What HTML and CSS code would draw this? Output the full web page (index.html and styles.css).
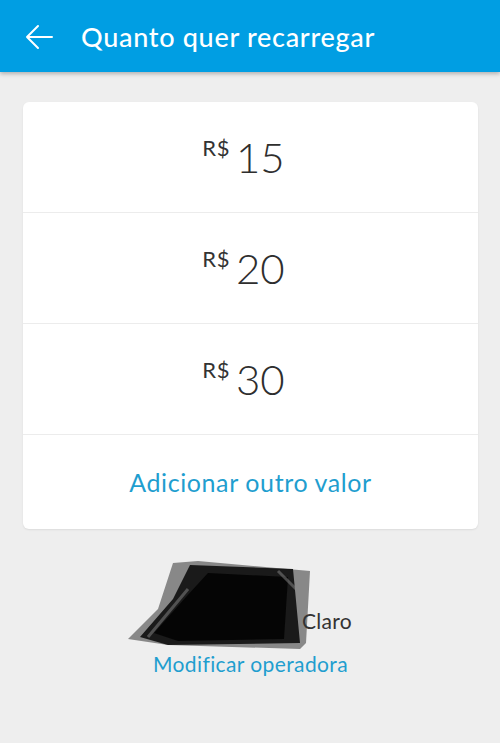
FILE: index.html
```html
<!DOCTYPE html>
<html lang="pt-BR">
<head>
  <meta charset="UTF-8">
  <title>Quanto quer recarregar</title>
  <link rel="stylesheet" href="styles.css">
</head>
<body>
  <header class="topbar">
    <svg class="back" width="30" height="26" viewBox="0 0 30 26">
      <path d="M28 13H3M14 2L3 13l11 11" fill="none" stroke="#fff" stroke-width="2" stroke-linecap="round" stroke-linejoin="round"/>
    </svg>
    <h1>Quanto quer recarregar</h1>
  </header>

  <main class="content">
    <div class="card">
      <div class="amount"><span class="currency">R$</span><span class="value">15</span></div>
      <div class="amount"><span class="currency">R$</span><span class="value">20</span></div>
      <div class="amount"><span class="currency">R$</span><span class="value">30</span></div>
      <div class="other">Adicionar outro valor</div>
    </div>

    <div class="carrier">
      <div class="carrier-row">
        <!-- logo da operadora rabiscado no print original -->
        <svg class="redact" width="184" height="90" viewBox="0 0 184 90">
          <polygon points="45,4 70,2 182,12 178,84 172,90 40,86 0,80 30,50" fill="#666" opacity="0.75"/>
          <polygon points="62,6 165,10 172,84 40,86 12,78 45,40" fill="#1a1a1a"/>
          <polygon points="80,14 160,18 156,80 50,82 26,74 58,38" fill="#050505"/>
          <path d="M150 12L178 40M20 78L60 30" stroke="#888" stroke-width="3" opacity="0.5"/>
        </svg>
        <span class="carrier-name">Claro</span>
      </div>
      <div class="change">Modificar operadora</div>
    </div>
  </main>
</body>
</html>
```

FILE: styles.css
```css
body {
  margin: 0;
  padding: 0;
  font-family: Lato, "Open Sans", sans-serif;
  background: #eeeeee;
  color: #333;
  min-height: 100vh;
}

.topbar {
  height: 72px;
  background: #009ee3;
  display: flex;
  align-items: center;
  padding: 0 24px;
  box-shadow: 0 2px 4px rgba(0,0,0,0.25);
}

.back {
  margin-right: 27px;
  margin-top: 1px;
}

.topbar h1 {
  margin: 0;
  color: #fff;
  font-size: 27px;
  font-weight: 500;
  letter-spacing: 0.7px;
}

.content {
  padding: 30px 22px 0 23px;
}

.card {
  background: #fff;
  border-radius: 6px;
  box-shadow: 0 1px 2px rgba(0,0,0,0.08);
}

.amount {
  height: 110px;
  border-bottom: 1px solid #ececec;
  display: flex;
  justify-content: center;
  align-items: center;
}

.currency {
  font-size: 22px;
  letter-spacing: 0.5px;
  align-self: flex-start;
  margin-top: 32px;
  margin-right: 6px;
}

.value {
  font-size: 42px;
  font-weight: 300;
  color: #2e2e2e;
  margin-right: 14px;
}

.other {
  height: 94px;
  display: flex;
  align-items: center;
  justify-content: center;
  color: #1f9ecf;
  font-size: 25px;
  letter-spacing: 0.6px;
}

.carrier {
  display: flex;
  flex-direction: column;
  align-items: center;
  padding-top: 30px;
}

.carrier-row {
  display: flex;
  align-items: flex-end;
  margin-right: 21px;
}

.redact {
  margin-right: -10px;
}

.carrier-name {
  font-size: 21px;
  letter-spacing: 0.3px;
  color: #333;
  margin-bottom: 16px;
}

.change {
  margin-top: 2px;
  color: #1f9ecf;
  font-size: 21px;
  letter-spacing: 0.4px;
}
```
